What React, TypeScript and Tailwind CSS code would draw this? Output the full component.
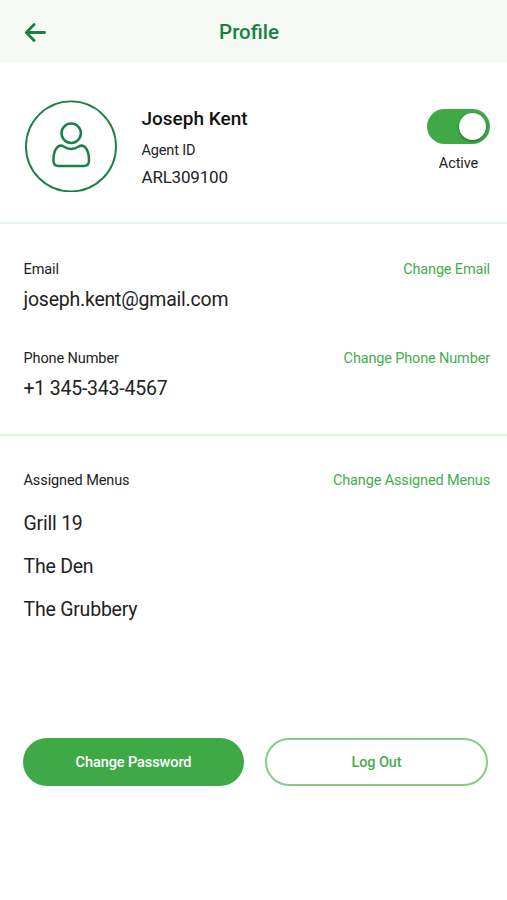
import React from "react";

interface FieldProps {
  label: string;
  value: string;
  action: string;
}

const MENUS = ["Grill 19", "The Den", "The Grubbery"];

const BackArrow = () => (
  <svg width="24" height="20" viewBox="0 0 24 20" fill="none" stroke="#1b7f45" strokeWidth="2.8" strokeLinecap="round" strokeLinejoin="round">
    <path d="M10.1 2.5 2.3 10.5l7.8 7.9M2.6 10.5h18" />
  </svg>
);

const Avatar = () => (
  <svg width="92" height="92" viewBox="0 0 92 92" fill="none" stroke="#1b8048">
    <circle cx="46" cy="46.4" r="45" strokeWidth="1.9" />
    <circle cx="46.2" cy="33.3" r="9.7" strokeWidth="2.5" />
    <path strokeWidth="2.5" strokeLinejoin="round" d="M38.7 46.5c-2.2-1.3-4.7-1-6.500.8-2.700 2.700-3.800 7.200-3.800 13.200 0 3.700 2 5.500 5.300 5.500h25c3.300 0 5.300-1.800 5.300-5.500 0-6-1.100-10.500-3.800-13.200-1.800-1.800-4.300-2.100-6.500-.8-4.800 3.100-10.200 3.100-15 0Z" />
  </svg>
);

const Toggle = () => (
  <button type="button" role="switch" aria-checked="true" aria-label="Active" className="flex h-[35px] w-[63px] items-center justify-end rounded-full bg-[#3fa948] pr-1">
    <span className="size-[27px] rounded-full bg-white shadow-[0_1px_3px_rgba(0,0,0,0.45)]" />
  </button>
);

const Field = ({ label, value, action }: FieldProps) => (
  <div>
    <div className="flex items-center justify-between leading-5">
      <span className="text-[14.5px] tracking-[-0.1px]">{label}</span>
      <button type="button" className="text-[14.5px] tracking-[-0.15px] text-[#45ad4e]">
        {action}
      </button>
    </div>
    <p className="mt-2 text-[19.5px] leading-6 tracking-[-0.22px]">{value}</p>
  </div>
);

export default function App() {
  return (
    <div className="min-h-[900px] w-full bg-white font-[Roboto,sans-serif] text-[#222222]">
      <header className="grid h-[62px] grid-cols-[60px_1fr_60px] items-center bg-[#f5faf5] pt-0.5">
        <button type="button" aria-label="Back" className="pl-6">
          <BackArrow />
        </button>
        <h1 className="pr-[9px] text-center text-[20.5px] font-medium text-[#1b7f45]">Profile</h1>
      </header>

      {/* Agent summary */}
      <section className="flex h-[162px] border-b-2 border-[#e2f5e4] pt-[38px] pr-[17px] pl-[25px]">
        <Avatar />
        <div className="ml-[24.5px] flex-1 pt-[7px]">
          <h2 className="text-[19px] leading-6 font-medium text-[#111111]">Joseph Kent</h2>
          <p className="mt-[10px] text-[14.5px] leading-5 tracking-[-0.15px]">Agent ID</p>
          <p className="mt-1 text-[17px] leading-6 tracking-[-0.2px]">ARL309100</p>
        </div>
        <div className="flex flex-col items-center pt-[9px]">
          <Toggle />
          <span className="mt-[10px] text-[14.5px] leading-5 tracking-[-0.1px]">Active</span>
        </div>
      </section>

      {/* Contact details */}
      <section className="flex h-[212px] flex-col gap-[37px] border-b-2 border-[#daf4da] pt-[36px] pr-[17px] pl-[23.5px]">
        <Field label="Email" value="joseph.kent@gmail.com" action="Change Email" />
        <Field label="Phone Number" value="+1 345-343-4567" action="Change Phone Number" />
      </section>

      <section className="pt-[35px] pr-[17px] pl-[23.5px]">
        <div className="flex items-center justify-between leading-5">
          <span className="text-[14.5px] tracking-[-0.1px]">Assigned Menus</span>
          <button type="button" className="text-[14.5px] tracking-[-0.15px] text-[#45ad4e]">
            Change Assigned Menus
          </button>
        </div>
        <ul className="mt-[21px] flex flex-col gap-[19px]">
          {MENUS.map((menu) => (
            <li key={menu} className="text-[19.5px] leading-6 tracking-[-0.22px]">
              {menu}
            </li>
          ))}
        </ul>
      </section>

      <div className="mt-[116px] flex gap-[21px] pr-[19px] pl-[23px]">
        <button type="button" className="h-12 w-[221px] rounded-full bg-[#3fa948] pt-0.5 text-[14.5px] font-medium tracking-[-0.08px] text-white">
          Change Password
        </button>
        <button type="button" className="h-12 w-[223px] rounded-full border-2 border-[#86cb8b] pt-0.5 text-[14.5px] font-medium tracking-[-0.08px] text-[#45ad4e]">
          Log Out
        </button>
      </div>
    </div>
  );
}
